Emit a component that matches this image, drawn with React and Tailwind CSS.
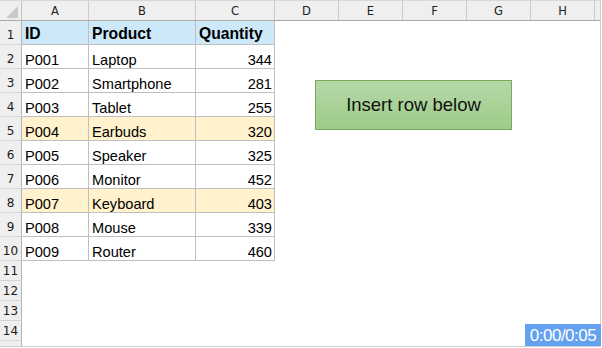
import React from "react";

const rows = [
  ["P001", "Laptop", 344, false],
  ["P002", "Smartphone", 281, false],
  ["P003", "Tablet", 255, false],
  ["P004", "Earbuds", 320, true],
  ["P005", "Speaker", 325, false],
  ["P006", "Monitor", 452, false],
  ["P007", "Keyboard", 403, true],
  ["P008", "Mouse", 339, false],
  ["P009", "Router", 460, false],
];

const cols = [
  ["A", "w-[67px]"],
  ["B", "w-[107px]"],
  ["C", "w-[79px]"],
  ["D", "w-[64px]"],
  ["E", "w-[64px]"],
  ["F", "w-[64px]"],
  ["G", "w-[64px]"],
  ["H", "w-[64px]"],
];

const hdrFont = { fontFamily: "'DejaVu Sans', sans-serif" };
const cellFont = { fontFamily: "'Liberation Sans', Arial, sans-serif" };

function RowNum({ n, tall }) {
  return (
    <div
      className={`w-[22px] shrink-0 bg-[#efefef] border-r border-b border-r-[#b4b4b4] border-b-[#d6d6d6] flex justify-center text-[12px] leading-none text-[#1a1a1a] ${
        tall ? "items-end pb-[3px]" : "items-center"
      }`}
      style={hdrFont}
    >
      {n}
    </div>
  );
}

function Cell({ w, bg, bold, right, children }) {
  return (
    <div
      className={`${w} shrink-0 h-full border-r border-b border-[#bfbfbf] ${bg} flex items-end leading-none text-black whitespace-nowrap ${
        bold ? "font-bold text-[15.7px] pb-[2px] pl-[3px]" : "text-[14.6px] pl-[3px]"
      } ${right ? "justify-end pr-[2px]" : ""}`}
      style={cellFont}
    >
      {children}
    </div>
  );
}

export default function App() {
  return (
    <div className="relative w-[602px] h-[348px] bg-white overflow-hidden">
      <div className="w-[601px] h-[347px] border-r border-b border-[#cfcfcf] flex flex-col overflow-hidden">
        <div className="flex h-[21px] shrink-0 bg-[#efefef] border-t border-t-[#d9d9d9] border-b border-b-[#a9a9a9]">
          <div className="w-[22px] shrink-0 border-r border-[#c4c4c4] relative">
            <svg className="absolute left-0 top-0" width="21" height="19" viewBox="0 0 21 19">
              <polygon points="18,5 18,17 6,17" fill="#c9c9c9" />
            </svg>
          </div>
          {cols.map(([l, w]) => (
            <div
              key={l}
              className={`${w} shrink-0 border-r border-[#cccccc] flex items-end justify-center pb-[3px] text-[11.5px] leading-none text-[#222]`}
              style={hdrFont}
            >
              {l}
            </div>
          ))}
          <div className="flex-1" />
        </div>

        <div className="flex h-[24px] shrink-0">
          <RowNum n={1} tall />
          <Cell w="w-[67px]" bg="bg-[#cde8f9]" bold>ID</Cell>
          <Cell w="w-[107px]" bg="bg-[#cde8f9]" bold>Product</Cell>
          <Cell w="w-[79px]" bg="bg-[#cde8f9]" bold>Quantity</Cell>
          <div className="flex-1" />
        </div>

        {rows.map(([id, p, q, hl], i) => {
          const bg = hl ? "bg-[#fff2cc]" : "bg-white";
          return (
            <div key={id} className="flex h-[24px] shrink-0">
              <RowNum n={i + 2} tall />
              <Cell w="w-[67px]" bg={bg}>{id}</Cell>
              <Cell w="w-[107px]" bg={bg}>{p}</Cell>
              <Cell w="w-[79px]" bg={bg} right>{q}</Cell>
              <div className="flex-1" />
            </div>
          );
        })}

        {[11, 12, 13, 14].map((n) => (
          <div key={n} className="flex h-[20px] shrink-0">
            <RowNum n={n} />
            <div className="flex-1" />
          </div>
        ))}
        <div className="flex flex-1">
          <div className="w-[22px] shrink-0 bg-[#efefef] border-r border-[#b4b4b4]" />
          <div className="flex-1" />
        </div>
      </div>

      <div
        className="absolute left-[315px] top-[80px] w-[197px] h-[50px] border border-[#78ac5a] bg-gradient-to-b from-[#b6d8a9] to-[#9ecb87] flex items-center justify-center text-[18.5px] text-[#111]"
        style={cellFont}
      >
        Insert row below
      </div>

      <div
        className="absolute left-[525px] top-[324px] w-[76px] h-[22px] bg-[#64a2ef] flex items-center justify-center text-white text-[17px] leading-none tracking-[-0.5px]"
        style={cellFont}
      >
        0:00/0:05
      </div>
    </div>
  );
}
